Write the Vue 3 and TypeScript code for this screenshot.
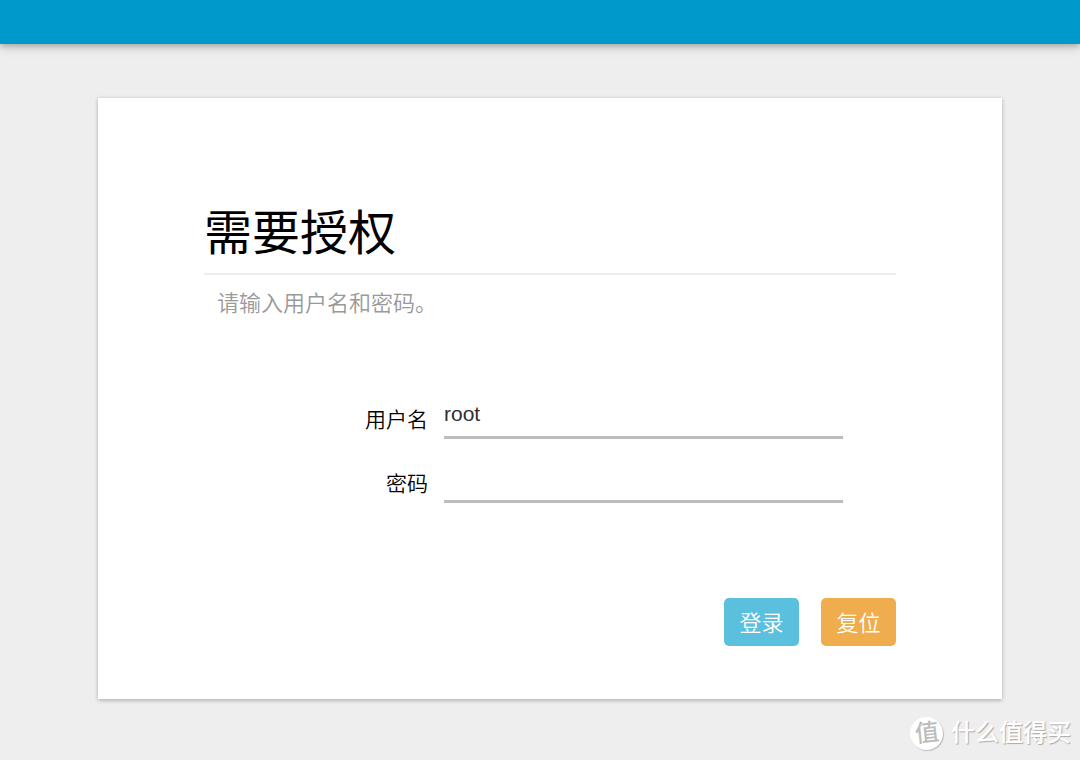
<script setup lang="ts">
import { ref } from 'vue'

const username = ref('root')
const password = ref('')

function resetForm(): void {
  username.value = 'root'
  password.value = ''
}
</script>

<template>
  <div class="page">
    <header class="bar"></header>
    <main class="main">
      <form class="card" @submit.prevent @reset.prevent="resetForm">
        <h1 class="title">需要授权</h1>
        <p class="hint">请输入用户名和密码。</p>
        <div class="fields">
          <div class="row">
            <label class="label" for="username">用户名</label>
            <input id="username" v-model="username" class="input" type="text" autocomplete="off" />
          </div>
          <div class="row">
            <label class="label" for="password">密码</label>
            <input id="password" v-model="password" class="input" type="password" autocomplete="off" />
          </div>
        </div>
        <div class="actions">
          <button class="btn login" type="submit">登录</button>
          <button class="btn reset" type="reset">复位</button>
        </div>
      </form>
    </main>
    <div class="watermark">
      <span class="badge"><span class="badge-char">值</span></span>
      <span class="brand">什么值得买</span>
    </div>
  </div>
</template>

<style>
body {
  margin: 0;
  background: #eeeeee;
}
</style>

<style scoped>
.page {
  position: relative;
  box-sizing: border-box;
  min-height: 100vh;
  background: #eeeeee;
  color: #000;
  font-family: "Liberation Sans", "Noto Sans CJK SC", sans-serif;
}
.bar {
  height: 44px;
  background: #0099cc;
  box-shadow: 0 2px 6px rgba(0, 0, 0, 0.25), 0 3px 12px rgba(0, 0, 0, 0.12);
}
.main {
  padding: 54px 78px 61px 98px;
}
.card {
  padding: 104px 106px 53px;
  background: #fff;
  box-shadow: 0 2px 4px rgba(0, 0, 0, 0.18), 0 0 4px rgba(0, 0, 0, 0.12);
}
.title {
  margin: 0;
  padding-bottom: 7px;
  border-bottom: 2px solid #eeeeee;
  font-size: 48px;
  line-height: 64px;
  font-weight: 400;
}
.hint {
  margin: 0;
  padding: 13px;
  color: #999;
  font-size: 22px;
  line-height: 32px;
  font-weight: 350;
}
.fields {
  display: grid;
  gap: 20px;
  padding: 62px 53px 0 0;
}
.row {
  display: grid;
  grid-template-columns: 224px 1fr;
  column-gap: 16px;
}
.label {
  padding-top: 9px;
  text-align: right;
  font-size: 21px;
  line-height: 32px;
  font-weight: 350;
}
.input {
  box-sizing: border-box;
  width: 100%;
  min-width: 0;
  height: 44px;
  padding: 0 0 4px;
  border: 0;
  border-bottom: 3px solid #bdbdbd;
  border-radius: 0;
  outline: none;
  background: transparent;
  color: #303030;
  font-family: inherit;
  font-size: 21px;
}
.actions {
  display: flex;
  justify-content: flex-end;
  gap: 22px;
  padding-top: 95px;
}
.btn {
  width: 75px;
  height: 48px;
  padding: 3px 0 0;
  border: 0;
  border-radius: 5px;
  color: #fff;
  font-family: inherit;
  font-size: 22px;
  line-height: 32px;
  font-weight: 350;
}
.login {
  background: #5bc0de;
}
.reset {
  background: #f0ad4e;
}
.watermark {
  position: absolute;
  right: 9px;
  bottom: 10px;
  display: flex;
  align-items: center;
  gap: 8px;
  pointer-events: none;
}
.badge {
  display: flex;
  align-items: center;
  justify-content: center;
  width: 33px;
  height: 33px;
  border-radius: 50%;
  background: #fff;
  box-shadow: 1px 1px 1px #bbb;
}
.badge-char {
  color: #bdbdbd;
  font-size: 24px;
  line-height: 32px;
  font-weight: 500;
  transform: rotate(-6deg);
}
.brand {
  color: #fff;
  font-size: 24px;
  line-height: 34px;
  font-weight: 500;
  text-shadow: 1px 1px 1px #aaa;
}
</style>
